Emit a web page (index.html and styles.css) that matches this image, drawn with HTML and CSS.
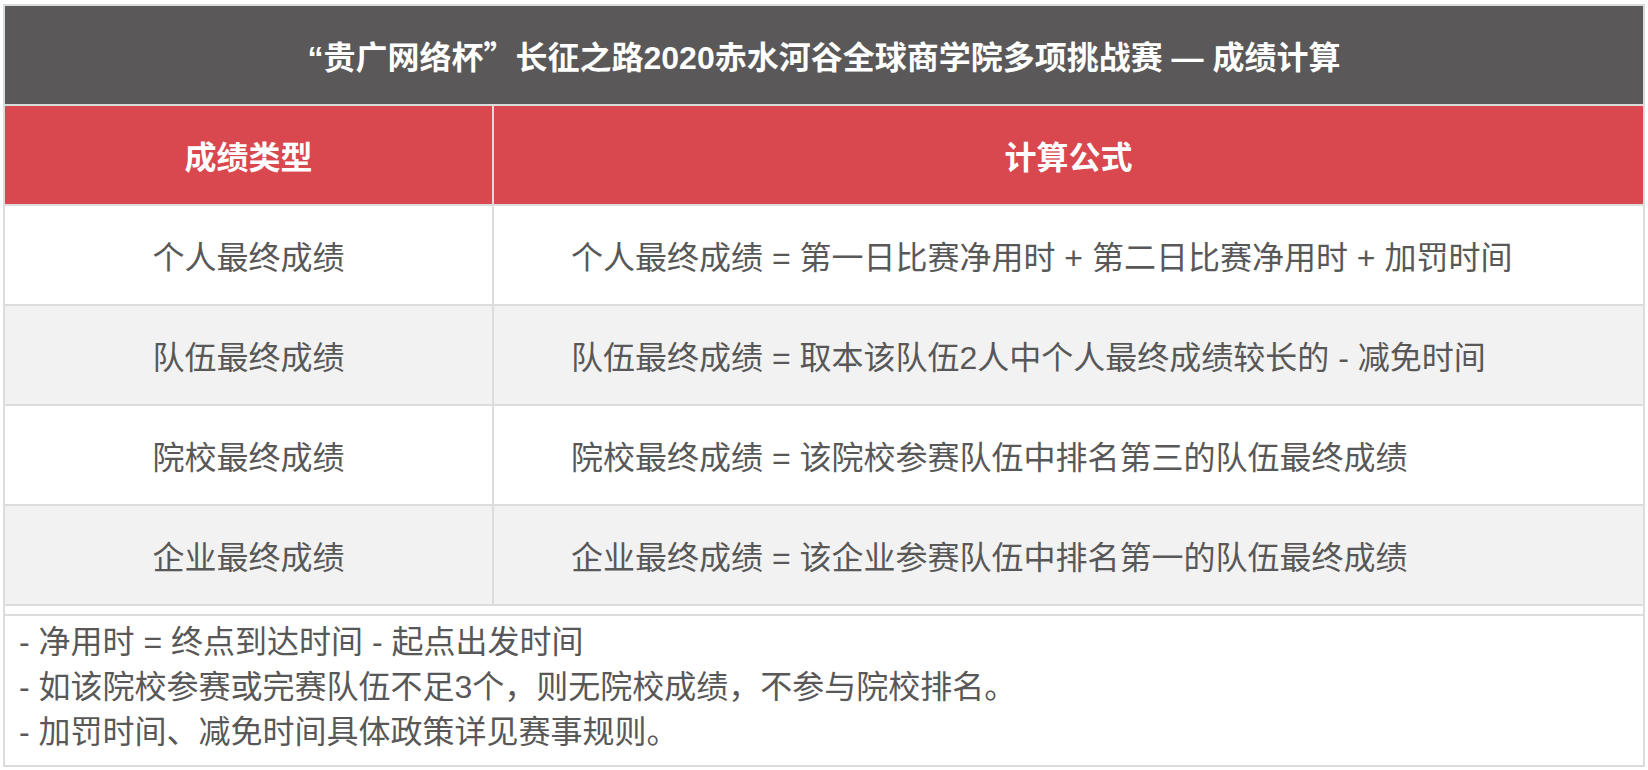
FILE: index.html
```html
<!DOCTYPE html>
<html lang="zh-CN">
<head>
<meta charset="utf-8">
<title>成绩计算</title>
<link rel="stylesheet" href="styles.css">
</head>
<body>
<div class="page">
  <div class="sheet">
    <div class="title">“贵广网络杯<span class="q">”</span>长征之路2020赤水河谷全球商学院多项挑战赛 — 成绩计算</div>
    <div class="head c1">成绩类型</div>
    <div class="head c2 center">计算公式</div>

    <div class="cell c1">个人最终成绩</div>
    <div class="cell c2">个人最终成绩 = 第一日比赛净用时 + 第二日比赛净用时 + 加罚时间</div>

    <div class="cell c1 alt">队伍最终成绩</div>
    <div class="cell c2 alt">队伍最终成绩 = 取本该队伍2人中个人最终成绩较长的 - 减免时间</div>

    <div class="cell c1">院校最终成绩</div>
    <div class="cell c2">院校最终成绩 = 该院校参赛队伍中排名第三的队伍最终成绩</div>

    <div class="cell c1 alt">企业最终成绩</div>
    <div class="cell c2 alt">企业最终成绩 = 该企业参赛队伍中排名第一的队伍最终成绩</div>

    <div class="strip"></div>

    <div class="notes">
      <p>- 净用时 = 终点到达时间 - 起点出发时间</p>
      <p>- 如该院校参赛或完赛队伍不足3个，则无院校成绩，不参与院校排名。</p>
      <p>- 加罚时间、减免时间具体政策详见赛事规则。</p>
    </div>
  </div>
</div>
</body>
</html>
```

FILE: styles.css
```css
html, body {
  margin: 0;
  padding: 0;
  background: #ffffff;
}

.page {
  padding: 4px 0 0 3px;
}

.sheet {
  width: 1642px;
  box-sizing: border-box;
  border: 2px solid #dcdcdc;
  display: grid;
  grid-template-columns: 489px 1fr;
  font-family: "Liberation Sans", "Noto Sans CJK SC", sans-serif;
  font-size: 32px;
  color: #585858;
}

.title {
  grid-column: 1 / span 2;
  height: 100px;
  box-sizing: border-box;
  border-bottom: 2px solid #dcdcdc;
  background: #5a5859;
  color: #ffffff;
  font-weight: 700;
  display: flex;
  align-items: center;
  justify-content: center;
  white-space: pre;
}

.q {
  font-family: "Noto Sans CJK SC", sans-serif;
}

.head {
  height: 100px;
  box-sizing: border-box;
  border-bottom: 2px solid #dcdcdc;
  background: #d9474f;
  color: #ffffff;
  font-weight: 700;
  display: flex;
  align-items: center;
  justify-content: center;
}

.cell {
  height: 100px;
  box-sizing: border-box;
  border-bottom: 2px solid #dcdcdc;
  background: #ffffff;
  display: flex;
  align-items: center;
}

.cell.c1 {
  justify-content: center;
}

.cell.c2 {
  padding-left: 77px;
}

.c1 {
  border-right: 2px solid #dcdcdc;
}

.alt {
  background: #f2f2f2;
}

.strip {
  grid-column: 1 / span 2;
  height: 10px;
  box-sizing: border-box;
  border-bottom: 2px solid #dcdcdc;
}

.notes {
  grid-column: 1 / span 2;
  padding: 4px 14px 10px;
}

.notes p {
  margin: 0;
  line-height: 45px;
}
```
